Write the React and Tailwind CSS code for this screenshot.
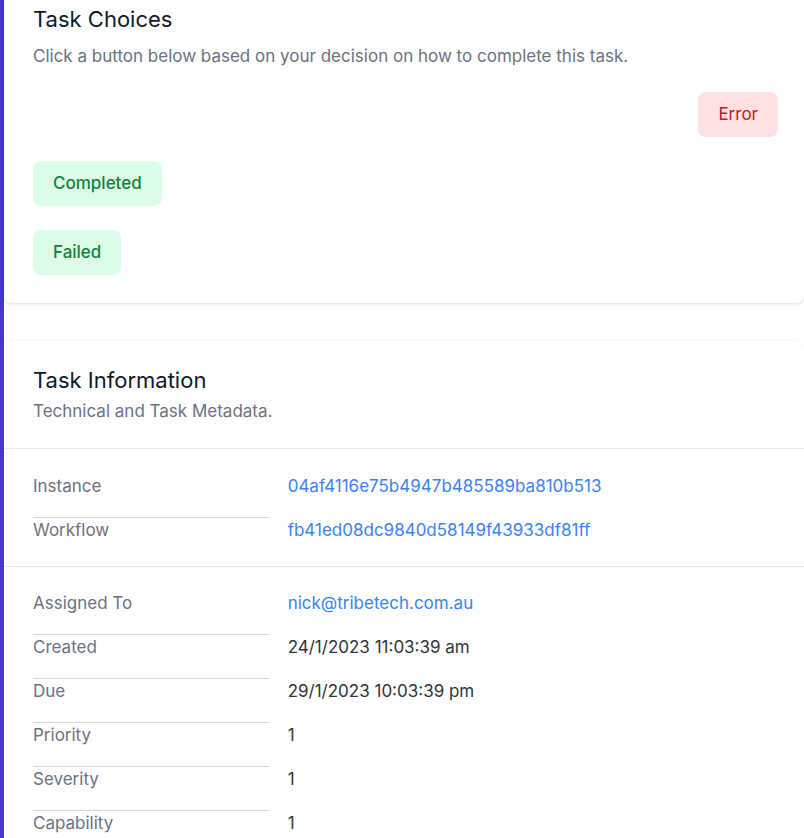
import React from "react";

function Row({ label, value, link, first }) {
  return (
    <div className={"grid grid-cols-3 gap-x-[19px] " + (first ? "" : "mt-[19px]")}>
      <dt className={"text-[17px] leading-6 text-[#6b7280] " + (first ? "" : "border-t border-[#d1d5db]")}>{label}</dt>
      <dd className={"col-span-2 text-[17px] leading-6 " + (first ? "" : "pt-px ") + (link ? "text-[#3b82f6]" : "text-[#30343b]")}>{value}</dd>
    </div>
  );
}

export default function App() {
  return (
    <div className="flex min-h-[838px] w-[804px] bg-[#fefefe]" style={{ fontFamily: "Inter, 'Noto Sans', sans-serif" }}>
      <div className="w-1 shrink-0 bg-[#4537c9]" />
      <div className="flex-1">
        <div className="rounded-b-lg bg-white pl-[29px] pr-[26px] pt-[5px] pb-7 shadow-[0_1px_3px_rgba(0,0,0,0.14)]">
          <h2 className="text-[22px] leading-7 text-[#111827]">Task Choices</h2>
          <p className="mt-[11px] text-[17px] leading-6 text-[#6b7280]">Click a button below based on your decision on how to complete this task.</p>
          <div className="mt-6 flex justify-end">
            <button className="h-[45px] rounded-lg bg-[#fee2e2] px-5 text-[17px] text-[#b91c1c]">Error</button>
          </div>
          <div className="mt-6 flex">
            <button className="h-[45px] rounded-lg bg-[#dcfce7] px-5 text-[17px] font-medium text-[#15803d]">Completed</button>
          </div>
          <div className="mt-6 flex">
            <button className="h-[45px] rounded-lg bg-[#dcfce7] px-5 text-[17px] font-medium text-[#15803d]">Failed</button>
          </div>
        </div>

        <div className="mt-[38px] rounded-t-lg bg-white shadow-[0_-1px_2px_rgba(0,0,0,0.04)]">
          <div className="pl-[29px] pr-[26px] pt-[25px] pb-[25px] border-b border-[#e5e7eb]">
            <h2 className="text-[22px] leading-7 text-[#111827]">Task Information</h2>
            <p className="mt-[5px] text-[17px] leading-6 text-[#6b7280]">Technical and Task Metadata.</p>
          </div>
          <dl className="pl-[29px] pr-[26px] pt-[25px] pb-6 border-b border-[#e5e7eb]">
            <Row first label="Instance" value="04af4116e75b4947b485589ba810b513" link />
            <Row label="Workflow" value="fb41ed08dc9840d58149f43933df81ff" link />
          </dl>
          <dl className="pl-[29px] pr-[26px] pt-6 pb-6">
            <Row first label="Assigned To" value="nick@tribetech.com.au" link />
            <Row label="Created" value="24/1/2023 11:03:39 am" />
            <Row label="Due" value="29/1/2023 10:03:39 pm" />
            <Row label="Priority" value="1" />
            <Row label="Severity" value="1" />
            <Row label="Capability" value="1" />
          </dl>
        </div>
      </div>
    </div>
  );
}
